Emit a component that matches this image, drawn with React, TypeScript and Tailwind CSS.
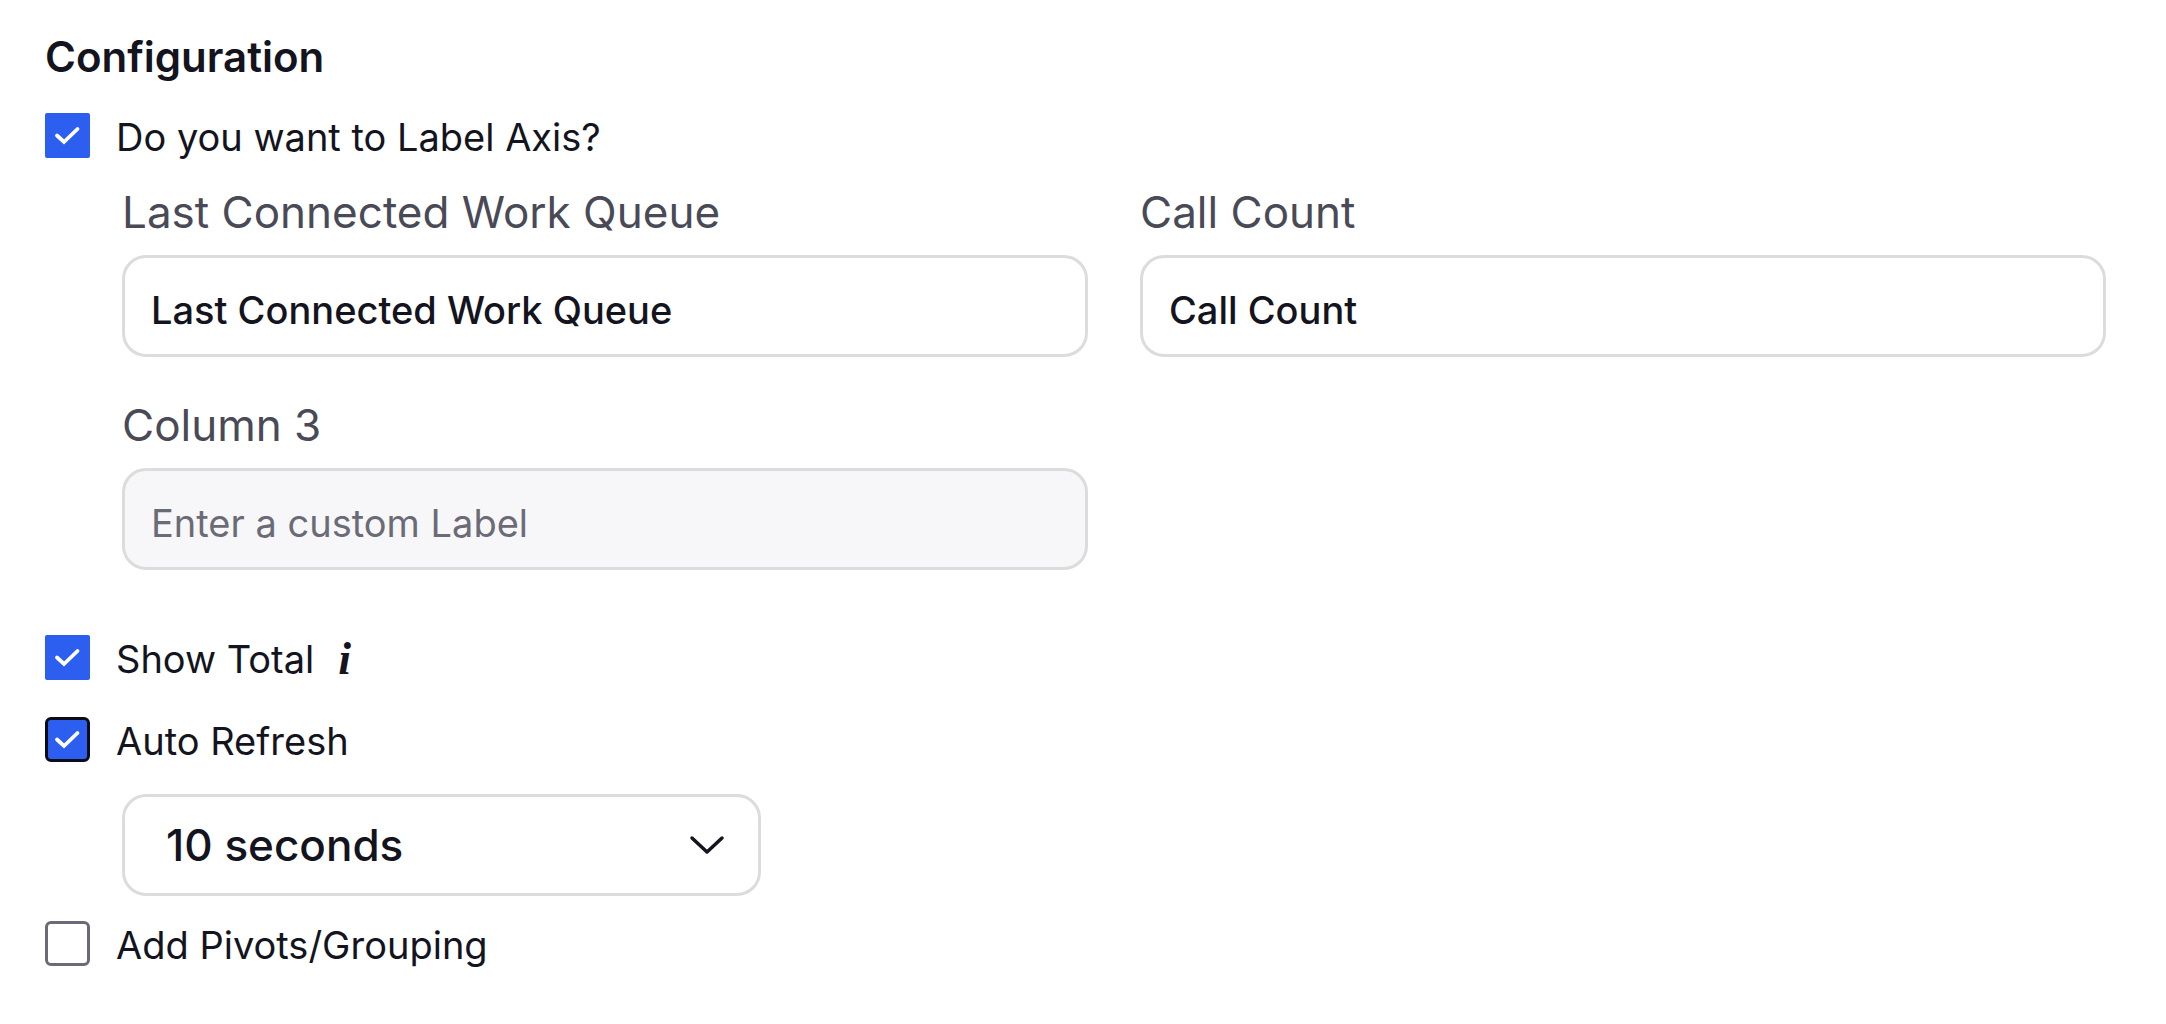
import { useState } from 'react';

const fields = [
    { id: 'axis-x', label: 'Last Connected Work Queue', value: 'Last Connected Work Queue' },
    { id: 'axis-y', label: 'Call Count', value: 'Call Count' },
    { id: 'column-3', label: 'Column 3', value: '' },
];

type CheckRowProps = {
    id: string;
    label: string;
    defaultChecked?: boolean;
    outlined?: boolean;
    children?: React.ReactNode;
};

const CheckRow = ({ id, label, defaultChecked, outlined, children }: CheckRowProps) => (
    <div className="flex h-[45px] items-center">
        <span className="grid size-[45px] shrink-0">
            <input
                id={id}
                type="checkbox"
                defaultChecked={defaultChecked}
                className={`peer col-start-1 row-start-1 size-[45px] appearance-none rounded-[6px] border-3 border-[#6b6b76] checked:bg-[#2c5fef] ${
                    outlined ? 'checked:border-[#0c0c16]' : 'checked:rounded-[2px] checked:border-0'
                }`}
            />
            <svg viewBox="0 0 45 45" className="pointer-events-none invisible col-start-1 row-start-1 size-[45px] peer-checked:visible">
                <path d="M12 22.5 19 29 32.5 16" fill="none" stroke="#fff" strokeWidth="3.8" strokeLinecap="round" />
            </svg>
        </span>
        <label htmlFor={id} className="ml-[26px] pt-[2px] text-[38px] leading-[44px]">{label}</label>
        {children}
    </div>
);

const App = () => {
    const [values, setValues] = useState(fields.map((f) => f.value));

    return (
        <main className="min-h-screen bg-white pt-[31px] pr-[60px] pb-8 pl-[45px] font-['Inter',sans-serif] text-[#14141f] [font-optical-sizing:none]">
            <h2 className="mb-[30px] text-[42px] leading-[52px] font-semibold">Configuration</h2>

            <CheckRow id="label-axis" label="Do you want to Label Axis?" defaultChecked />

            <div className="mt-[27px] mb-[65px] ml-[77px] grid grid-cols-2 gap-x-[52px] gap-y-[41px]">
                {fields.map((field, i) => (
                    <div key={field.id} className="flex flex-col">
                        <label htmlFor={field.id} className="mb-4 text-[44px] leading-[54px] text-[#4a4a57]">{field.label}</label>
                        <input
                            id={field.id}
                            type="text"
                            value={values[i]}
                            placeholder="Enter a custom Label"
                            onChange={(e) => setValues(values.map((v, j) => (j === i ? e.target.value : v)))}
                            className="h-[102px] w-full rounded-[24px] border-3 border-[#dcdcdc] px-[26px] pt-2 text-[38px] font-medium placeholder-shown:bg-[#f7f7fa] placeholder-shown:font-normal placeholder:text-[#6b6b76]"
                        />
                    </div>
                ))}
            </div>

            <CheckRow id="show-total" label="Show Total" defaultChecked>
                <span className="ml-6 pt-[2px] font-['Liberation_Serif',serif] text-[46px] leading-[44px] font-bold italic">i</span>
            </CheckRow>

            <div className="mt-[37px]">
                <CheckRow id="auto-refresh" label="Auto Refresh" defaultChecked outlined />
            </div>

            <div className="mt-8 mb-[25px] ml-[77px] grid w-[639px] items-center">
                <select
                    aria-label="Refresh interval"
                    className="col-start-1 row-start-1 h-[102px] appearance-none rounded-[24px] border-3 border-[#dcdcdc] px-[41px] text-[44px] font-medium"
                >
                    <option>10 seconds</option>
                    <option>30 seconds</option>
                    <option>60 seconds</option>
                </select>
                <svg viewBox="0 0 36 20" className="pointer-events-none col-start-1 row-start-1 mr-9 h-5 w-9 justify-self-end">
                    <path d="M3 3 18 17 33 3" fill="none" stroke="currentColor" strokeWidth="3.5" strokeLinecap="round" strokeLinejoin="round" />
                </svg>
            </div>

            <CheckRow id="pivots" label="Add Pivots/Grouping" />
        </main>
    );
};

export default App;
